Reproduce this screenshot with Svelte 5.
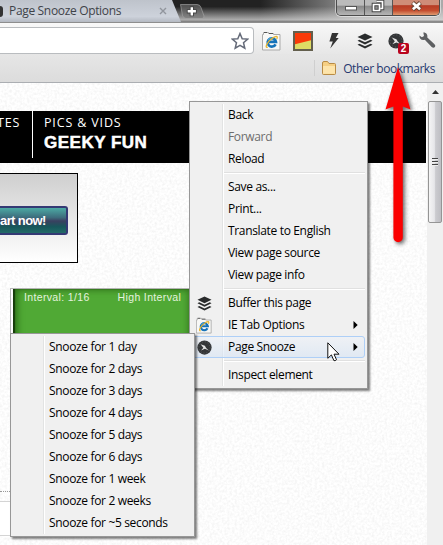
<script lang="ts">
	interface MenuItem {
		label?: string;
		icon?: 'buffer' | 'ie' | 'snooze';
		disabled?: boolean;
		submenu?: boolean;
		active?: boolean;
		separator?: boolean;
	}

	const pageMenu: MenuItem[] = [
		{ label: 'Back' },
		{ label: 'Forward', disabled: true },
		{ label: 'Reload' },
		{ separator: true },
		{ label: 'Save as...' },
		{ label: 'Print...' },
		{ label: 'Translate to English' },
		{ label: 'View page source' },
		{ label: 'View page info' },
		{ separator: true },
		{ label: 'Buffer this page', icon: 'buffer' },
		{ label: 'IE Tab Options', icon: 'ie', submenu: true },
		{ label: 'Page Snooze', icon: 'snooze', submenu: true, active: true },
		{ separator: true },
		{ label: 'Inspect element' }
	];

	const snoozeMenu: MenuItem[] = [
		'1 day',
		'2 days',
		'3 days',
		'4 days',
		'5 days',
		'6 days',
		'1 week',
		'2 weeks',
		'~5 seconds'
	].map((span) => ({ label: `Snooze for ${span}` }));
</script>

{#snippet bufferIcon()}
	<svg class="icon" viewBox="0 0 16 16">
		<path fill="#292b2c" d="M8 0.5 15.5 4 8 7.6 0.5 4Z" />
		<path fill="#292b2c" d="M2.4 6.7 8 9.3 13.6 6.7 15.5 7.8 8 11.5 0.5 7.8Z" />
		<path fill="#292b2c" d="M2.4 10.7 8 13.3 13.6 10.7 15.5 11.8 8 15.5 0.5 11.8Z" />
	</svg>
{/snippet}

{#snippet ieIcon()}
	<svg class="ie" viewBox="0 0 19 20">
		<path fill="#f8f8f6" stroke="#a9a9a9" d="M0.5 3.5h1v-2h5v1h5v1h6.5v15.5H0.5Z" />
		<path stroke="#555" d="M2 1.5h3M7 2.5h4" />
		<path fill="none" stroke="#1673b9" stroke-width="2.6" d="M13.6 13.3A4.2 4.2 0 1 1 14 10.9H6.4" />
		<path fill="none" stroke="#58b6e5" stroke-width="0.8" d="M6.1 9.2C7 7.3 9 6.6 11 7.2" />
		<path
			fill="none"
			stroke="#e9b52d"
			stroke-width="1.3"
			d="M5.7 16.1C2.6 17.4 4.5 11.7 9.3 8.1 13.6 4.6 16.5 4.5 14.7 8"
		/>
	</svg>
{/snippet}

{#snippet snoozeIcon()}
	<svg class="icon" viewBox="0 0 16 16">
		<circle cx="8" cy="8" r="7.6" fill="#343638" />
		<circle cx="8" cy="8" r="6" fill="none" stroke="#5d6062" stroke-width="1" stroke-dasharray="1 2.1" />
		<path fill="#e4e4e4" d="M3.8 4.6 8.4 6.2 9.7 8.4 12.6 11.2 8.4 9.4 4.3 11.2 6.8 8.2Z" />
	</svg>
{/snippet}

{#snippet menu(items: MenuItem[])}
	{#each items as item}
		{#if item.separator}
			<li class="separator"></li>
		{:else}
			<li class="item" class:disabled={item.disabled} class:active={item.active}>
				<span class="item-icon">
					{#if item.icon === 'buffer'}
						{@render bufferIcon()}
					{:else if item.icon === 'ie'}
						{@render ieIcon()}
					{:else if item.icon === 'snooze'}
						{@render snoozeIcon()}
					{/if}
				</span>
				<span class="item-label">{item.label}</span>
				{#if item.submenu}
					<svg class="more" viewBox="0 0 5 8"><path d="M0.5 0 4.7 4 0.5 8Z" /></svg>
				{/if}
			</li>
		{/if}
	{/each}
{/snippet}

<div class="window">
	<header class="tabstrip">
		<div class="tab">
			<span class="favicon"></span>
			<span class="tab-title">Page Snooze Options</span>
			<svg class="tab-close" viewBox="0 0 8 8"><path d="M1 1 7 7M7 1 1 7" /></svg>
		</div>
		<svg class="new-tab" viewBox="0 0 34 23">
			<path
				fill="#777"
				fill-opacity=".6"
				stroke="#aaa"
				stroke-opacity=".6"
				d="M7.5 4.5H24q3 0 4 3l3 8.5q.5 2.5-2 2.5H13q-2.5 0-3.5-3Z"
			/>
			<path fill="none" stroke="#444" stroke-width="4.2" d="M18.800 6.300v10M13.800 11.300h10" />
			<path fill="none" stroke="#fff" stroke-width="2.4" d="M18.800 7.200v8.200M14.700 11.300h8.200" />
		</svg>
		<div class="controls">
			<span class="control">
				<svg viewBox="0 0 27 15"><rect x="8.5" y="6.5" width="11" height="3.500" fill="#fff" stroke="#555" /></svg>
			</span>
			<span class="control">
				<svg viewBox="0 0 27 15">
					<path fill="none" stroke="#444" stroke-width="3.600" d="M11.500 1.500h6v7h-2M8.500 4.500h6v6h-6Z" />
					<path fill="none" stroke="#fff" stroke-width="1.700" d="M11.500 1.500h6v7h-2M8.500 4.500h6v6h-6Z" />
				</svg>
			</span>
			<span class="control close">
				<svg viewBox="0 0 47 15">
					<path stroke="#643" stroke-width="4.600" d="M20 2.500l8 7M28 2.500l-8 7" />
					<path stroke="#fff" stroke-width="2.700" d="M20.300 2.800l7.400 6.400M27.700 2.800l-7.400 6.400" />
				</svg>
			</span>
		</div>
	</header>

	<div class="toolbar">
		<div class="omnibox">
			<svg class="star" viewBox="0 0 18 18">
				<path d="M9 1.500 11.200 6.700 16.700 7.100 12.500 10.700 13.800 16.200 9 13.300 4.200 16.200 5.500 10.700 1.300 7.100 6.800 6.700Z" />
			</svg>
		</div>
		<div class="extensions">
			{@render ieIcon()}
			<svg class="split" viewBox="0 0 20 20">
				<rect x="1" y="1" width="18" height="18" fill="#dedc64" />
				<path fill="#f93a08" d="M1 1h18v8L1 13.500Z" />
				<rect x="1" y="1" width="18" height="18" fill="none" stroke="#635f4d" stroke-width="2" />
			</svg>
			<svg class="bolt" viewBox="0 0 10 16">
				<path fill="#333" d="M3 0H9.500L6.800 5H9.700L1.200 15.500 3.800 8.600H0.400Z" />
			</svg>
			{@render bufferIcon()}
			<span class="snooze">
				{@render snoozeIcon()}
				<span class="badge">2</span>
			</span>
			<svg class="wrench" viewBox="0 0 17 17">
				<path
					fill="#5d5f61"
					d="M4.300.6 5 4.100 2.900 5.200.4 3.400C.2 6.700 2.500 8.700 5.800 7.800L12.700 15.100Q14.500 16.500 15.900 15.100 17 13.600 15.500 12.200L8.300 5.500C8.900 2.700 7.200.4 4.300.6Z"
				/>
			</svg>
		</div>
	</div>

	<div class="bookmarks">
		<span class="divider"></span>
		<svg class="folder" viewBox="0 0 16 14">
			<path
				fill="#f6cf83"
				stroke="#b88b45"
				d="M1.500 12.500V2Q1.500.500 3 .500h3.500l1.500 2h5.500q1 0 1 1v9q0 1-1 1h-11q-1 0-1-1Z"
			/>
			<path fill="#fde4ab" d="M2 5h12v7.800H2Z" />
		</svg>
		<span>Other bookmarks</span>
	</div>

	<div class="viewport">
		<main class="page">
			<svg class="paper">
				<filter id="grain">
					<feTurbulence type="fractalNoise" baseFrequency=".4" numOctaves="2" seed="4" />
					<feColorMatrix values="0 0 0 0 .4  0 0 0 0 .4  0 0 0 0 .4  .28 0 0 0 -.1" />
				</filter>
				<rect width="100%" height="100%" filter="url(#grain)" />
			</svg>
			<nav>
				<div class="nav-item first">TES</div>
				<div class="nav-item second">
					<span>PICS &amp; VIDS</span>
					<strong>GEEKY FUN</strong>
				</div>
			</nav>
			<div class="banner"><span class="start">art now!</span></div>
			<div class="player">
				<div class="screen">
					<span>Interval: 1/16</span>
					<span>High Interval</span>
				</div>
			</div>
			<div class="dots"></div>
			<div class="field"></div>
		</main>
		<div class="scrollbar">
			<svg viewBox="0 0 7 4"><path d="M3.500 0 7 4H0Z" /></svg>
			<div class="thumb"><i></i><i></i><i></i></div>
		</div>
	</div>

	<ul class="menu page-menu">{@render menu(pageMenu)}</ul>
	<ul class="menu snooze-menu">{@render menu(snoozeMenu)}</ul>

	<svg class="cursor" viewBox="0 0 13 20">
		<path d="M.8.800v15.500l3.600-3.400 2.500 5.700q1.300.600 2.600-.900L7 12.200h5Z" />
	</svg>
	<svg class="arrow" viewBox="0 0 36 185">
		<path d="M18 4 30.500 46.500 22.800 43.500V174.500a4.700 4.700 0 0 1-9.400 0V43.500L5.500 46.500Z" />
	</svg>
</div>

<style>
	:global(body) {
		margin: 0;
		overflow: hidden;
	}

	.window {
		position: relative;
		display: flex;
		flex-direction: column;
		width: 443px;
		height: 545px;
		overflow: hidden;
		font-family: 'Open Sans', 'Noto Sans', sans-serif;
		font-size: 12px;
		color: #000;
		background: #fff;
	}

	svg {
		display: block;
		flex: none;
	}

	/* Title bar */
	.tabstrip {
		display: flex;
		height: 22px;
		background:
			linear-gradient(to bottom, transparent 30%, rgb(220 220 220 / 0.75) 90%, #777 100%),
			linear-gradient(to right, #222 0 260px, #999 360px, #aaa);
	}

	.tab {
		display: flex;
		align-items: center;
		box-sizing: border-box;
		width: 181px;
		background: linear-gradient(#bec3cb, #cdd2db 75%, #b4b9c2);
		clip-path: polygon(0 0, 172px 0, 181px 100%, 0 100%);
	}

	.favicon {
		width: 3px;
		height: 11px;
		border-radius: 0 8px 8px 0;
		background: #333;
	}

	.tab-title {
		width: 150px;
		margin-left: 6px;
		white-space: nowrap;
		color: #3f4349;
		letter-spacing: -0.33px;
		line-height: 20px;
	}

	.tab-close {
		width: 8px;
		height: 8px;
	}

	.tab-close path {
		fill: none;
		stroke: #91959d;
		stroke-width: 1.4;
	}

	.new-tab {
		width: 34px;
		height: 23px;
		margin-left: -8px;
	}

	.controls {
		display: flex;
		box-sizing: border-box;
		height: 16px;
		margin: 0 3px 0 auto;
		border: 1px solid #4c4c4c;
		border-top: 0;
		border-radius: 0 0 5px 5px;
		overflow: hidden;
		box-shadow: 0 0 0 1px rgb(255 255 255 / 0.5);
	}

	.control {
		width: 27px;
		border-right: 1px solid #555;
		background: linear-gradient(#bbb 0 35%, #888 40%, #b5b5b5);
	}

	.control svg {
		width: 100%;
		height: 15px;
	}

	.control.close {
		width: 46px;
		border: 0;
		background: linear-gradient(#cf8d78 0 30%, #b63c25 38%, #c44d2f 70%, #df9a70);
	}

	/* Toolbar */
	.toolbar {
		display: flex;
		box-sizing: border-box;
		height: 32px;
		padding-top: 4px;
		border-top: 1px solid #8d8d8d;
		background: linear-gradient(#f8f8f8, #e7e7e7);
	}

	.omnibox {
		display: flex;
		align-items: center;
		justify-content: flex-end;
		box-sizing: border-box;
		width: 254px;
		height: 27px;
		padding-right: 4px;
		border: 1px solid #b9bcbf;
		border-left: 0;
		border-radius: 0 4px 4px 0;
		background: #fff;
	}

	.star {
		width: 18px;
		height: 18px;
	}

	.star path {
		fill: #fff;
		stroke: #656b79;
		stroke-width: 1.5;
	}

	.extensions {
		display: flex;
		align-items: center;
		flex: 1;
		height: 27px;
		padding-left: 8px;
	}

	.icon {
		width: 16px;
		height: 16px;
	}

	.ie {
		width: 19px;
		height: 20px;
	}

	.split {
		width: 20px;
		height: 20px;
		margin-left: 12px;
	}

	.bolt {
		width: 10px;
		height: 16px;
		margin: 0 18px 0 16px;
	}

	.snooze {
		position: relative;
		margin: 0 15px;
	}

	.badge {
		position: absolute;
		left: 10px;
		top: 10px;
		width: 11px;
		height: 11px;
		border-radius: 2px;
		background: #b9041e;
		color: #fff;
		font: bold 10px/11px 'Liberation Sans', sans-serif;
		text-align: center;
	}

	.wrench {
		width: 17px;
		height: 17px;
	}

	/* Bookmarks bar */
	.bookmarks {
		display: flex;
		align-items: center;
		justify-content: flex-end;
		gap: 6px;
		box-sizing: border-box;
		height: 29px;
		padding-right: 8px;
		border-bottom: 1px solid #abaeb2;
		background: linear-gradient(#e6e6e6, #dcdcdc);
		color: #26386f;
		letter-spacing: -0.45px;
		white-space: nowrap;
	}

	.divider {
		width: 1px;
		height: 16px;
		background: #cfcfcf;
	}

	.folder {
		width: 16px;
		height: 14px;
	}

	/* Page */
	.viewport {
		display: flex;
		flex: 1;
	}

	.page {
		position: relative;
		display: flex;
		flex-direction: column;
		align-items: flex-start;
		width: 427px;
		background: #fff;
		isolation: isolate;
	}

	nav {
		display: flex;
		width: 426px;
		height: 52px;
		margin-top: 28px;
		background: #000;
		color: #fff;
	}

	.nav-item {
		height: 47px;
		white-space: nowrap;
		font-size: 12.5px;
		font-weight: 500;
		letter-spacing: 0.85px;
		line-height: 24px;
	}

	.first {
		width: 32px;
		border-right: 1px solid #fff;
		text-indent: -3px;
	}

	.second {
		display: flex;
		flex-direction: column;
		padding-left: 11px;
	}

	.second strong {
		font: bold 17px/15px 'Liberation Sans', sans-serif;
		letter-spacing: 0.5px;
		-webkit-text-stroke: 0.5px #fff;
	}

	.banner {
		display: flex;
		justify-content: flex-end;
		box-sizing: border-box;
		width: 78px;
		height: 90px;
		margin-top: 10px;
		padding: 32px 9px 0 0;
		border: 1px solid #000;
		border-left: 0;
		background: linear-gradient(#cfcfcf, #fff);
	}

	.start {
		box-sizing: border-box;
		width: 68px;
		height: 29px;
		padding-right: 21px;
		border: 2px solid #343974;
		border-left: 0;
		border-radius: 0 3px 3px 0;
		background: linear-gradient(#4caaa4, #3d6c7c 38%, #3a4060 52%, #17575b 75%, #236a68);
		color: #fff;
		font: bold 13px/25px 'Liberation Sans', sans-serif;
		letter-spacing: -0.6px;
		text-align: right;
		white-space: nowrap;
	}

	.player {
		box-sizing: border-box;
		width: 190px;
		height: 52px;
		margin: 25px 0 0 10px;
		padding-left: 2px;
		border: 1px solid #b5b5b5;
		border-right: 0;
	}

	.screen {
		display: flex;
		gap: 28px;
		box-sizing: border-box;
		width: 177px;
		height: 50px;
		padding-left: 11px;
		background: #50a935;
		box-shadow:
			inset 2px 0 1px #163b0a,
			inset 7px 0 7px -3px #2a6b15,
			inset -5px 4px 6px -3px #34771f;
		color: #e5f2df;
		font: 10.5px/16px 'Liberation Sans', sans-serif;
		letter-spacing: 0.35px;
		white-space: nowrap;
	}

	.dots {
		width: 30px;
		margin-top: 151px;
		border-top: 1px dotted #999;
	}

	.field {
		width: 30px;
		height: 33px;
		margin-top: 9px;
		border: solid #d4d4d4;
		border-width: 1px 0;
		background: #fff;
	}

	.paper {
		position: absolute;
		inset: 0;
		z-index: -1;
		width: 100%;
		height: 100%;
	}

	.scrollbar {
		display: flex;
		flex-direction: column;
		align-items: center;
		width: 16px;
		background: #f0f0f0;
	}

	.scrollbar > svg {
		width: 7px;
		height: 4px;
		margin: 7px 0 7px;
		fill: #333;
	}

	.thumb {
		display: flex;
		flex-direction: column;
		align-items: center;
		justify-content: center;
		gap: 1px;
		box-sizing: border-box;
		width: 14px;
		height: 122px;
		border: 1px solid #959595;
		border-radius: 2px;
		background: linear-gradient(to right, #f5f5f5, #e6e6e9 45%, #cbcbcf 55%, #bebec3);
	}

	.thumb i {
		width: 6px;
		height: 1px;
		border-bottom: 1px solid #eee;
		background: #444;
	}

	/* Context menus */
	.menu {
		position: absolute;
		box-sizing: border-box;
		margin: 0;
		padding: 2px;
		border: 1px solid #979797;
		background:
			linear-gradient(#e2e3e3, #e2e3e3) 32px 2px / 1px calc(100% - 4px) no-repeat,
			linear-gradient(#fff, #fff) 33px 2px / 1px calc(100% - 4px) no-repeat,
			#f0f0f0;
		box-shadow: 2px 2px 2px rgb(0 0 0 / 0.5);
		list-style: none;
	}

	.page-menu {
		left: 189px;
		top: 101px;
		width: 179px;
	}

	.snooze-menu {
		left: 10px;
		top: 333px;
		width: 185px;
	}

	.item {
		display: flex;
		align-items: center;
		box-sizing: border-box;
		height: 22px;
		padding-right: 6px;
		border: 1px solid transparent;
		border-radius: 3px;
	}

	.item.active {
		border-color: #aecff7;
		background: linear-gradient(rgb(238 242 248 / 0.6), rgb(214 228 245 / 0.6));
	}

	.item.disabled {
		color: #6d6d6d;
	}

	.item-icon {
		display: flex;
		justify-content: center;
		width: 22px;
	}

	.item-icon .icon {
		width: 15px;
		height: 15px;
	}

	.item-icon .ie {
		width: 16px;
		height: 17px;
	}

	.item-label {
		flex: 1;
		margin-left: 13px;
		line-height: 20px;
		letter-spacing: -0.34px;
		white-space: nowrap;
	}

	.more {
		width: 5px;
		height: 8px;
	}

	.separator {
		height: 1px;
		margin: 2px 0 2px 32px;
		border-bottom: 1px solid #fff;
		background: #e0e0e0;
	}

	.cursor {
		position: absolute;
		left: 327px;
		top: 342px;
		width: 13px;
		height: 20px;
	}

	.cursor path {
		fill: #fff;
		stroke: #111;
	}

	.arrow {
		position: absolute;
		left: 380px;
		top: 63px;
		width: 36px;
		height: 185px;
		filter: drop-shadow(2px 2px 2px rgb(0 0 0 / 0.6));
	}

	.arrow path {
		fill: #fb0000;
	}
</style>
